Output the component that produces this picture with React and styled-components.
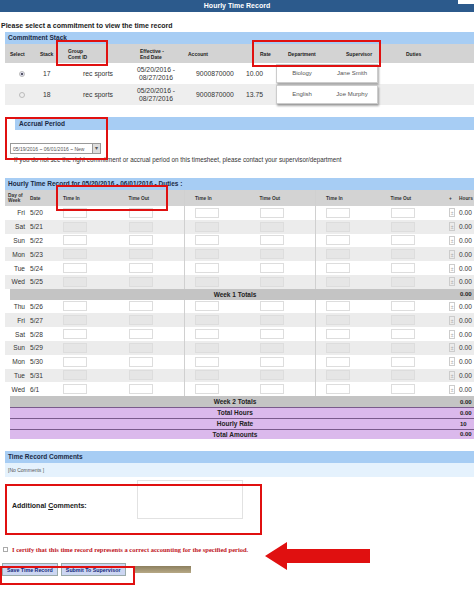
import React from 'react'
import styled, { createGlobalStyle } from 'styled-components'

const Global = createGlobalStyle`
  body { margin: 0; background: #fff; font-family: "Liberation Sans", Arial, sans-serif; color: #222; }
  * { box-sizing: border-box; }
`

const commitments = [
  { stack: 17, group: 'rec sports', from: '05/20/2016 -', to: '08/27/2016', account: '9000870000', rate: '10.00', dept: 'Biology', sup: 'Jane Smith', checked: true },
  { stack: 18, group: 'rec sports', from: '05/20/2016 -', to: '08/27/2016', account: '9000870000', rate: '13.75', dept: 'English', sup: 'Joe Murphy' },
]

const week1 = [['Fri', '5/20'], ['Sat', '5/21'], ['Sun', '5/22'], ['Mon', '5/23'], ['Tue', '5/24'], ['Wed', '5/25']]
const week2 = [['Thu', '5/26'], ['Fri', '5/27'], ['Sat', '5/28'], ['Sun', '5/29'], ['Mon', '5/30'], ['Tue', '5/31'], ['Wed', '6/1']]

export default function App() {
  const renderDays = (days) =>
    days.map(([d, dt], i) => (
      <TimeRow key={dt} alt={i % 2 === 1}>
        <Cell right>{d}</Cell>
        <Cell>{dt}</Cell>
        {[0, 1, 2, 3, 4, 5].map((c) => (
          <TimeCell key={c} divider={c === 2 || c === 4}>
            <TimeInput alt={i % 2 === 1} />
          </TimeCell>
        ))}
        <Cell><Spin>±</Spin></Cell>
        <Cell>0.00</Cell>
      </TimeRow>
    ))

  return (
    <Page>
      <Global />
      <TitleBar>Hourly Time Record<Corner /></TitleBar>
      <Prompt>Please select a commitment to view the time record</Prompt>

      <Section>
        <SectionBar>Commitment Stack</SectionBar>
        <StackHead>
          <span>Select</span><span>Stack</span><span>Group<br />Comt ID</span><span>Effective -<br />End Date</span>
          <span>Account</span><span>Rate</span><span>Department</span><span>Supervisor</span><span>Duties</span>
        </StackHead>
        {commitments.map((c, i) => (
          <StackRow key={c.stack} alt={i === 1}>
            <Radio checked={c.checked} />
            <span>{c.stack}</span>
            <Center>{c.group}</Center>
            <Center>{c.from}<br />{c.to}</Center>
            <Center>{c.account}</Center>
            <span>{c.rate}</span>
            <PopCard>
              <span>{c.dept}</span><span>{c.sup}</span>
            </PopCard>
            <span />
          </StackRow>
        ))}
      </Section>

      <AccrualBar>Accrual Period</AccrualBar>
      <PeriodSelect>
        <span>05/19/2016 ~ 06/01/2016 ~ New</span>
        <Caret>▾</Caret>
      </PeriodSelect>
      <Note>If you do not see the right commitment or accrual period on this timesheet, please contact your supervisor/department</Note>

      <Section top={15}>
        <SectionBar>Hourly Time Record for 05/20/2016 - 06/01/2016 - Duties :</SectionBar>
        <TimeHead>
          <Cell small>Day of<br />Week</Cell><Cell small>Date</Cell>
          <TimeCell>Time In</TimeCell><TimeCell>Time Out</TimeCell>
          <TimeCell divider>Time In</TimeCell><TimeCell>Time Out</TimeCell>
          <TimeCell divider>Time In</TimeCell><TimeCell>Time Out</TimeCell>
          <Cell>+</Cell><Cell>Hours</Cell>
        </TimeHead>
        {renderDays(week1)}
        <TotalRow><span>Week 1 Totals</span><b>0.00</b></TotalRow>
        {renderDays(week2)}
        <TotalRow><span>Week 2 Totals</span><b>0.00</b></TotalRow>
        <TotalRow purple><span>Total Hours</span><b>0.00</b></TotalRow>
        <TotalRow purple><span>Hourly Rate</span><b>10</b></TotalRow>
        <TotalRow purple><span>Total Amounts</span><b>0.00</b></TotalRow>
      </Section>

      <Section top={12}>
        <SectionBar>Time Record Comments</SectionBar>
        <NoComments>[No Comments ]</NoComments>
      </Section>

      <CommentsRow>
        <label>Additional <u>C</u>omments:</label>
        <CommentBox />
      </CommentsRow>

      <Certify>
        <CheckBox />
        I certify that this time record represents a correct accounting for the specified period.
      </Certify>

      <Buttons>
        <Btn>Save Time Record</Btn>
        <Btn>Submit To Supervisor</Btn>
        <BrownBar />
      </Buttons>

      <Mark style={{ left: 56, top: 40, width: 52, height: 26 }} />
      <Mark style={{ left: 252, top: 40, width: 129, height: 27 }} />
      <Mark style={{ left: 5, top: 117, width: 103, height: 43 }} />
      <Mark style={{ left: 56, top: 185, width: 112, height: 26 }} />
      <Mark style={{ left: 5, top: 484, width: 257, height: 51 }} />
      <Mark style={{ left: 0, top: 566, width: 135, height: 19 }} />
      <Arrow viewBox="0 0 105 28">
        <polygon points="0,14 22,0 22,7 105,7 105,21 22,21 22,28" fill="#e01010" />
      </Arrow>
    </Page>
  )
}

const Page = styled.div`
  position: relative;
  width: 474px;
  height: 595px;
  overflow: hidden;
  font-size: 7px;
`

const TitleBar = styled.div`
  position: relative;
  height: 12px;
  background: #2c5a8c;
  color: #fff;
  font-weight: bold;
  font-size: 7px;
  line-height: 12px;
  text-align: center;
`

const Corner = styled.span`
  position: absolute;
  right: 0;
  top: 0;
  width: 16px;
  height: 4px;
  background: #fff;
`

const Prompt = styled.div`
  font-weight: bold;
  font-size: 7px;
  margin: 10px 0 0 1px;
  height: 10px;
`

const Section = styled.div`
  margin: ${({ top = 0 }) => top}px 0 0 5px;
`

const SectionBar = styled.div`
  height: 12px;
  line-height: 12px;
  background: #a7cdf4;
  font-weight: bold;
  font-size: 6.5px;
  padding-left: 3px;
  color: #1a2a44;
  white-space: nowrap;
  overflow: hidden;
`

const stackCols = '30px 28px 60px 56px 62px 30px 122px 1fr'

const StackHead = styled.div`
  display: grid;
  grid-template-columns: 30px 28px 72px 48px 72px 28px 58px 60px 1fr;
  align-items: center;
  height: 19px;
  background: #d3d3d3;
  font-size: 5px;
  font-weight: bold;
  padding-left: 5px;
  line-height: 6px;
`

const StackRow = styled.div`
  display: grid;
  grid-template-columns: ${stackCols};
  align-items: center;
  height: 21px;
  background: ${({ alt }) => (alt ? '#eeeeee' : '#fff')};
  font-size: 6.8px;
  color: #333;
  padding-left: 5px;
  line-height: 7.5px;
  & > span:nth-child(2) { padding-left: 3px; }
`

const Center = styled.span`
  text-align: center;
`

const Radio = styled.span`
  width: 6px;
  height: 6px;
  border-radius: 50%;
  margin-left: 9px;
  border: 1px solid #bbb;
  background: ${({ checked }) => (checked ? 'radial-gradient(#556 35%, #dde 45%)' : '#eee')};
`

const PopCard = styled.div`
  display: grid;
  grid-template-columns: 1fr 1fr;
  align-items: center;
  height: 19px;
  background: #fff;
  border: 1px solid #ccc;
  box-shadow: 1px 2px 2px rgba(0, 0, 0, 0.35);
  font-size: 6px;
  color: #555;
  text-align: center;
  width: 102px;
`

const AccrualBar = styled(SectionBar)`
  margin: 12px 0 0 15px;
  height: 13px;
  line-height: 13px;
  padding-left: 4px;
`

const PeriodSelect = styled.div`
  display: flex;
  align-items: center;
  justify-content: space-between;
  margin: 13px 0 0 10px;
  width: 91px;
  height: 11px;
  border: 1px solid #999;
  background: #fff;
  font-size: 5px;
  color: #555;
  padding-left: 2px;
`

const Caret = styled.span`
  width: 8px;
  height: 9px;
  background: #ddd;
  border-left: 1px solid #999;
  font-size: 6px;
  text-align: center;
  line-height: 9px;
`

const Note = styled.div`
  margin: 2px 0 0 14px;
  font-size: 6.3px;
  color: #333;
`

const timeCols = '22px 26px repeat(6, 65.5px) 10px 1fr'

const TimeHead = styled.div`
  display: grid;
  grid-template-columns: ${timeCols};
  align-items: center;
  height: 16px;
  background: #d3d3d3;
  font-size: 4.8px;
  font-weight: bold;
  line-height: 5px;
  color: #333;
`

const TimeRow = styled.div`
  display: grid;
  grid-template-columns: ${timeCols};
  align-items: center;
  height: 13.8px;
  background: ${({ alt }) => (alt ? '#ececec' : '#fff')};
  font-size: 6.6px;
  color: #333;
`

const Cell = styled.div`
  text-align: ${({ right }) => (right ? 'right' : 'left')};
  padding: ${({ right }) => (right ? '0 2px 0 0' : '0 0 0 3px')};
  font-size: ${({ small }) => (small ? '4.8px' : 'inherit')};
  white-space: nowrap;
`

const TimeCell = styled.div`
  height: 100%;
  display: flex;
  align-items: center;
  padding-left: 10px;
  border-left: ${({ divider }) => (divider ? '1px solid #d0d0d0' : 'none')};
`

const TimeInput = styled.div`
  width: 24px;
  height: 10px;
  background: ${({ alt }) => (alt ? '#e6e6e6' : '#fff')};
  border: 1px solid #ddd;
`

const Spin = styled.span`
  display: inline-block;
  width: 6px;
  height: 9px;
  border: 1px solid #ccc;
  font-size: 5px;
  color: #aaa;
  text-align: center;
  line-height: 8px;
`

const TotalRow = styled.div`
  display: grid;
  grid-template-columns: 1fr 14px;
  align-items: center;
  margin-left: 5px;
  height: 10.8px;
  background: ${({ purple }) => (purple ? '#dbb9ec' : '#c4c4c4')};
  border-top: ${({ purple }) => (purple ? '1px solid #7a5a8c' : 'none')};
  font-weight: bold;
  font-size: 6.5px;
  & > span { text-align: center; }
  & > b { font-size: 6px; }
`

const NoComments = styled.div`
  height: 14px;
  line-height: 14px;
  background: #e5f2fd;
  font-size: 5px;
  color: #555;
  padding-left: 3px;
`

const CommentsRow = styled.div`
  display: flex;
  align-items: flex-start;
  margin: 7px 0 0 12px;
  height: 48px;
  & > label {
    width: 125px;
    margin-top: 18px;
    font-weight: bold;
    font-size: 7px;
  }
`

const CommentBox = styled.div`
  width: 106px;
  height: 39px;
  margin-top: -4px;
  border: 1px solid #e2e2e2;
`

const Certify = styled.div`
  display: flex;
  align-items: center;
  gap: 4px;
  margin: 14px 0 0 3px;
  font-family: "Liberation Serif", "Times New Roman", serif;
  font-weight: bold;
  font-size: 6.5px;
  color: #c0141c;
`

const CheckBox = styled.span`
  width: 5px;
  height: 5px;
  border: 1px solid #aaa;
`

const Buttons = styled.div`
  display: flex;
  align-items: center;
  gap: 3px;
  margin: 10px 0 0 2px;
`

const Btn = styled.span`
  height: 13px;
  line-height: 13px;
  padding: 0 4px;
  background: #ccd6f2;
  border: 1px solid #9aa;
  color: #14287a;
  font-weight: bold;
  font-size: 5.3px;
`

const BrownBar = styled.span`
  width: 57px;
  height: 7px;
  margin-left: 5px;
  background: linear-gradient(#8c7f5e, #b7a986);
`

const Mark = styled.div`
  position: absolute;
  border: 2px solid #e01010;
`

const Arrow = styled.svg`
  position: absolute;
  left: 265px;
  top: 542px;
  width: 105px;
  height: 28px;
`
